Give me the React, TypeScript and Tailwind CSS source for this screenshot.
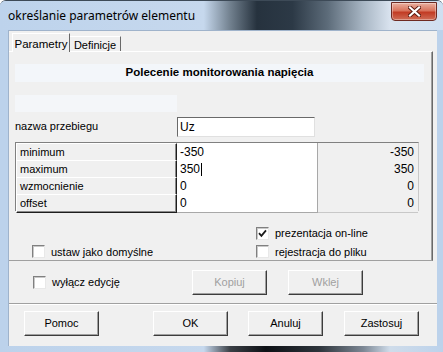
import React from "react";

function Checkbox({ label, checked }: { label: string; checked?: boolean }) {
  return (
    <div className="flex items-center gap-[6px]">
      <div className="flex h-[13px] w-[13px] items-center justify-center border border-t-[#808080] border-l-[#808080] border-r-[#e8e8e8] border-b-[#e8e8e8] bg-white shadow-[inset_1px_1px_0_#c8c8c8]">
        {checked && (
          <svg width="9" height="9" viewBox="0 0 9 9">
            <path d="M1 4.2 L3.4 6.8 L8 1.4" fill="none" stroke="#1a1a1a" strokeWidth="1.8" />
          </svg>
        )}
      </div>
      <span>{label}</span>
    </div>
  );
}

function Btn({ label, disabled }: { label: string; disabled?: boolean }) {
  return (
    <div
      className={`flex h-[25px] w-[75px] items-center justify-center border border-t-white border-l-white border-r-[#3c3c3c] border-b-[#3c3c3c] bg-[#f0f0f0] shadow-[inset_-1px_-1px_0_#a0a0a0] ${
        disabled ? "text-[#a0a0a0]" : "text-black"
      }`}
    >
      {label}
    </div>
  );
}

const rows = [
  { name: "minimum", value: "-350", current: "-350" },
  { name: "maximum", value: "350", current: "350", cursor: true },
  { name: "wzmocnienie", value: "0", current: "0" },
  { name: "offset", value: "0", current: "0" },
];

export default function App() {
  return (
    <div className="relative h-[352px] w-[443px] overflow-hidden rounded-t-[6px] border-t border-[#3d4a57] bg-[#bcd2eb] font-['Liberation_Sans',Arial,sans-serif] text-[11px] text-black">
      {/* title bar */}
      <div className="flex h-[29px] items-center bg-[linear-gradient(90deg,#bdd3ec_0%,#c6d8ed_46%,#71808e_52%,#26323e_58%,#2c3946_66%,#5d6c7a_74%,#a8b6c4_82%,#d8e2ee_88%,#cfdff1_100%)] pl-[8px] font-['Noto_Sans',sans-serif] text-[12px]">
        określanie parametrów elementu
      </div>
      <div className="absolute right-[6px] top-[1px] flex h-[19px] w-[46px] items-center justify-center rounded-b-[4px] border border-[#6e2a22] bg-[linear-gradient(180deg,#eab0a0_0%,#d8735c_45%,#c23c24_55%,#cf6d56_100%)] shadow-[inset_0_0_0_1px_rgba(255,255,255,0.35)]">
        <svg width="13" height="11" viewBox="0 0 13 11">
          <path d="M2 1.5 L11 9.5 M11 1.5 L2 9.5" stroke="#5a1a10" strokeWidth="4" strokeLinecap="square" />
          <path d="M2 1.5 L11 9.5 M11 1.5 L2 9.5" stroke="#ffffff" strokeWidth="2.2" strokeLinecap="square" />
        </svg>
      </div>

      {/* client area */}
      <div className="ml-[8px] flex h-[316px] w-[429px] flex-col border-t border-l border-[#9fb3cb] bg-[#f0f0f0]">
        {/* tabs */}
        <div className="flex h-[20px] items-end pl-[3px]">
          <div className="relative z-10 -mb-px flex h-[19px] w-[58px] items-start justify-center border border-b-0 border-t-white border-l-white border-r-[#696969] bg-[#f0f0f0] pt-[2px] text-[11.5px]">
            Parametry
          </div>
          <div className="flex h-[15px] w-[51px] items-start justify-center border-r border-t border-r-[#696969] border-t-white">
            Definicje
          </div>
        </div>

        {/* tab panel */}
        <div className="flex h-[210px] w-[424px] flex-col border-t border-r border-b border-t-white border-r-[#696969] border-b-[#a0a0a0] shadow-[inset_-1px_0_0_#a0a0a0]">
          <div className="ml-[6px] mt-[12px] flex h-[19px] w-[409px] items-center justify-center bg-[#f3f6fa] text-[11.5px] font-bold">
            Polecenie monitorowania napięcia
          </div>
          <div className="ml-[6px] mt-[13px] h-[19px] w-[162px] bg-[#f4f6f9]" />
          <div className="ml-[6px] mt-[5px] flex h-[20px] items-start">
            <span className="w-[162px] pt-[1px]">nazwa przebiegu</span>
            <div className="flex h-[20px] w-[138px] items-center border border-t-[#696969] border-l-[#696969] border-r-[#e0e0e0] border-b-[#e0e0e0] bg-white pl-[2px] text-[12px]">
              Uz
            </div>
          </div>

          {/* table */}
          <div className="ml-[6px] mt-[5px] w-[404px] border-t border-l border-r border-t-[#808080] border-l-[#808080] border-r-[#c8c8c8]">
            {rows.map((r) => (
              <div key={r.name} className="grid h-[17px] grid-cols-[161px_141px_1fr]">
                <div className="flex items-center border border-t-white border-l-white border-r-[#1e1e1e] border-b-[#1e1e1e] bg-[#f0f0f0] pl-[3px] shadow-[inset_-1px_-1px_0_#8a8a8a]">
                  {r.name}
                </div>
                <div className="flex items-center border-r border-b border-[#a8a8a8] bg-white pl-[3px] text-[12px]">
                  {r.value}
                  {r.cursor && <span className="ml-px h-[13px] w-px bg-black" />}
                </div>
                <div className="flex items-center justify-end border-b border-[#c8c8c8] bg-[#f0f0f0] pr-[4px] text-[12px]">
                  {r.current}
                </div>
              </div>
            ))}
          </div>

          {/* options */}
          <div className="mt-[14px] flex items-end">
            <div className="w-[247px] pl-[23px]">
              <Checkbox label="ustaw jako domyślne" />
            </div>
            <div className="flex flex-col gap-[2px]">
              <Checkbox label="prezentacja on-line" checked />
              <Checkbox label="rejestracja do pliku" />
            </div>
          </div>
        </div>

        {/* edit section */}
        <div className="flex h-[43px] items-start border-b border-b-[#a0a0a0] shadow-[0_1px_0_white]">
          <div className="mt-[13px] w-[183px] pl-[24px]">
            <Checkbox label="wyłącz edycję" />
          </div>
          <div className="mt-[9px] flex gap-[21px]">
            <Btn label="Kopiuj" disabled />
            <Btn label="Wklej" disabled />
          </div>
        </div>

        {/* buttons */}
        <div className="mt-[7px] flex pl-[15px]">
          <Btn label="Pomoc" />
          <div className="ml-[54px]">
            <Btn label="OK" />
          </div>
          <div className="ml-[20px]">
            <Btn label="Anuluj" />
          </div>
          <div className="ml-[21px]">
            <Btn label="Zastosuj" />
          </div>
        </div>
      </div>

      {/* bottom frame */}
      <div className="h-[7px] bg-[linear-gradient(90deg,#bcd2eb_0%,#c6d8ed_46%,#3a3f45_52%,#0e1116_60%,#2d343b_72%,#7c8794_82%,#cfdcea_88%,#bcd2eb_100%)]" />
    </div>
  );
}
